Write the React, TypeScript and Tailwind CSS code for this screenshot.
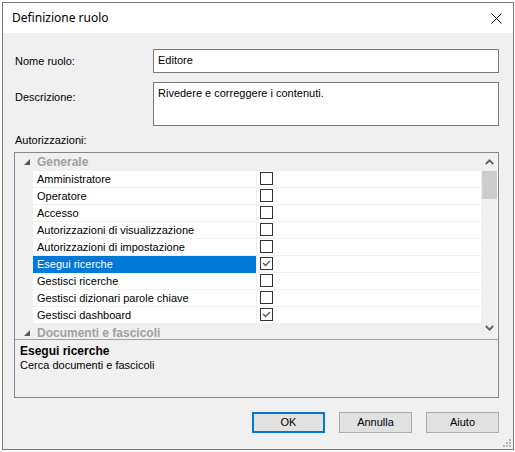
import React from 'react';

type Perm = { name: string; checked: boolean; selected?: boolean };

const perms: Perm[] = [
  { name: 'Amministratore', checked: false },
  { name: 'Operatore', checked: false },
  { name: 'Accesso', checked: false },
  { name: 'Autorizzazioni di visualizzazione', checked: false },
  { name: 'Autorizzazioni di impostazione', checked: false },
  { name: 'Esegui ricerche', checked: true, selected: true },
  { name: 'Gestisci ricerche', checked: false },
  { name: 'Gestisci dizionari parole chiave', checked: false },
  { name: 'Gestisci dashboard', checked: true },
];

const font = { fontFamily: '"Liberation Sans", Arial, sans-serif' };

const Expander = () => (
  <svg width="6" height="6" viewBox="0 0 6 6" className="block">
    <polygon points="6,0 6,6 0,6" fill="#595959" />
  </svg>
);

const CategoryRow = ({ label }: { label: string }) => (
  <div className="flex h-[18px] items-center bg-[#f0f0f0] shrink-0">
    <div className="w-[18px] flex justify-end pr-[3px]">
      <Expander />
    </div>
    <span className="pl-[4px] text-[12px] font-bold text-[#a0a0a0] leading-none">{label}</span>
  </div>
);

const CheckBox = ({ checked }: { checked: boolean }) => (
  <div className="w-[13px] h-[13px] border border-[#333333] bg-white flex items-center justify-center">
    {checked && (
      <svg width="11" height="11" viewBox="0 0 11 11">
        <polyline points="2,5 4.5,7.5 9,3" fill="none" stroke="#555555" strokeWidth="1.3" />
      </svg>
    )}
  </div>
);

const PermRow = ({ p }: { p: Perm }) => (
  <div className="flex h-[17px] shrink-0">
    <div className="w-[18px] bg-[#f0f0f0]" />
    <div
      className={
        p.selected
          ? 'w-[223px] bg-[#0078d7] text-white flex items-center pl-[4px] text-[11px]'
          : 'w-[223px] bg-white border-b border-[#f0f0f0] flex items-center pl-[4px] text-[11px] text-black'
      }
    >
      {p.name}
    </div>
    <div className="w-px bg-[#f0f0f0]" />
    <div className="flex-1 bg-white border-b border-[#f0f0f0] pl-[3px] pt-[1px]">
      <CheckBox checked={p.checked} />
    </div>
  </div>
);

const Button = ({ label, primary }: { label: string; primary?: boolean }) => (
  <button
    className={
      primary
        ? 'w-[73px] h-[21px] bg-[#e1e1e1] border-2 border-[#0078d7] text-[11px] text-black'
        : 'w-[73px] h-[21px] bg-[#e1e1e1] border border-[#adadad] text-[11px] text-black'
    }
  >
    {label}
  </button>
);

export default function App() {
  return (
    <div className="min-h-[452px] bg-white pt-[2px] pl-[2px]" style={font}>
      <div className="relative w-[512px] h-[448px] border border-[#7a7a7a] bg-[#f0f0f0] flex flex-col">
        {/* title bar */}
        <div className="h-[30px] bg-white flex items-center justify-between pl-[9px] pr-[11px] shrink-0">
          <span className="text-[12px] text-black" style={{ fontFamily: '"Segoe UI", "Noto Sans", sans-serif' }}>
            Definizione ruolo
          </span>
          <svg width="11" height="11" viewBox="0 0 11 11">
            <path d="M0.5 0.5 L10.5 10.5 M10.5 0.5 L0.5 10.5" stroke="#000" strokeWidth="1" />
          </svg>
        </div>

        <div className="flex flex-col pl-[11px] pr-[14px] pt-[16px] text-[11px] text-black">
          <div className="flex items-center h-[24px]">
            <span className="w-[139px] pl-[1px]">Nome ruolo:</span>
            <div className="flex-1 h-[24px] border border-[#7a7a7a] bg-white pl-[4px] pt-[3px] leading-[14px]">
              Editore
            </div>
          </div>

          <div className="flex items-start mt-[9px]">
            <span className="w-[139px] pl-[1px] pt-[7px]">Descrizione:</span>
            <div className="flex-1 h-[44px] border border-[#7a7a7a] bg-white pl-[4px] pt-[3px] leading-[14px]">
              Rivedere e correggere i contenuti.
            </div>
          </div>

          <span className="mt-[7px] pl-[1px] leading-[14px]">Autorizzazioni:</span>

          <div className="mt-[5px] w-[485px] h-[246px] border border-[#828790] flex flex-col">
            <div className="flex h-[187px] border-b border-[#a0a0a0] shrink-0">
              <div className="flex-1 flex flex-col overflow-hidden">
                <CategoryRow label="Generale" />
                {perms.map((p) => (
                  <PermRow key={p.name} p={p} />
                ))}
                <CategoryRow label="Documenti e fascicoli" />
              </div>
              <div className="w-[17px] h-[184px] bg-[#f0f0f0] border-r border-[#fafafa] flex flex-col items-center">
                <div className="h-[18px] flex items-center justify-center">
                  <svg width="9" height="6" viewBox="0 0 9 6">
                    <polyline points="0.8,5 4.5,1.3 8.2,5" fill="none" stroke="#606060" strokeWidth="1.8" />
                  </svg>
                </div>
                <div className="w-[15px] h-[28px] bg-[#cdcdcd]" />
                <div className="flex-1" />
                <div className="h-[18px] flex items-center justify-center">
                  <svg width="9" height="6" viewBox="0 0 9 6">
                    <polyline points="0.8,1 4.5,4.7 8.2,1" fill="none" stroke="#606060" strokeWidth="1.8" />
                  </svg>
                </div>
              </div>
            </div>
            <div className="flex flex-col pl-[5px] pt-[4px] leading-[14px]">
              <span className="font-bold text-[12px]">Esegui ricerche</span>
              <span>Cerca documenti e fascicoli</span>
            </div>
          </div>

          <div className="flex justify-end gap-[14px] mt-[14px] pr-[0px]">
            <Button label="OK" primary />
            <Button label="Annulla" />
            <Button label="Aiuto" />
          </div>
        </div>

        {/* size grip */}
        <svg className="absolute right-[2px] bottom-[1px]" width="10" height="10" viewBox="0 0 10 10">
          {[
            [8, 0], [8, 3], [5, 3], [8, 6], [5, 6], [2, 6],
          ].map(([x, y]) => (
            <rect key={`${x}-${y}`} x={x} y={y + 1} width="2" height="2" fill="#b8b8b8" />
          ))}
        </svg>
      </div>
    </div>
  );
}
